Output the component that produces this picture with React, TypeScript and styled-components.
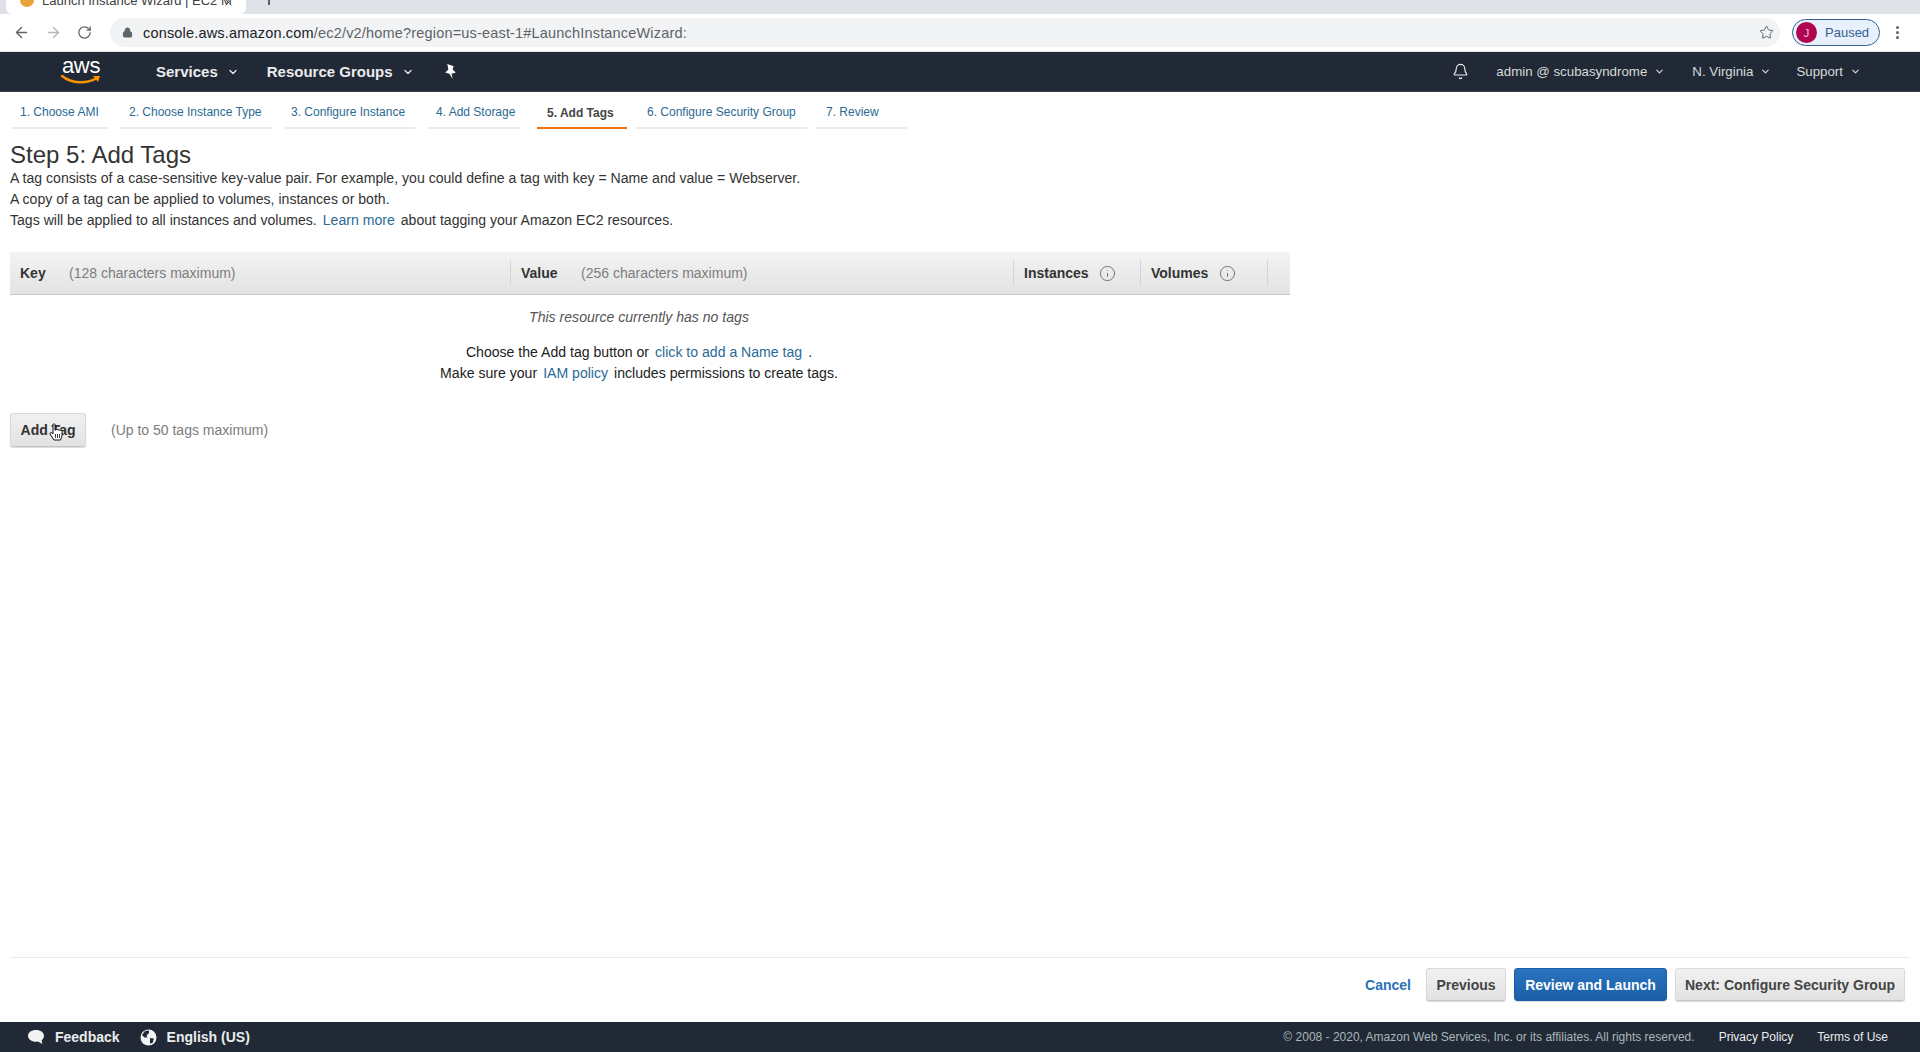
import React from "react";
import styled, { createGlobalStyle } from "styled-components";
import { ArrowLeft, ArrowRight, RotateCw, Lock, Star, Bell, ChevronDown, Info, X } from "lucide-react";

const GlobalStyle = createGlobalStyle`
  html, body { margin: 0; padding: 0; background: #fff; }
  body { font-family: "Liberation Sans", Arial, sans-serif; color: #16191f; overflow: hidden; }
  a { text-decoration: none; color: #2b6a94; }
`;

const Page = styled.div`
  display: flex;
  flex-direction: column;
  height: 1052px;
`;

/* browser chrome */
const TabStrip = styled.div`
  height: 14px;
  background: #dee1e6;
  display: flex;
  align-items: flex-end;
  overflow: hidden;
  flex: none;
`;
const BrowserTab = styled.div`
  width: 240px;
  height: 14px;
  margin-left: 6px;
  background: #fff;
  border-radius: 0 0 6px 6px;
  display: flex;
  align-items: flex-end;
  gap: 8px;
  padding-left: 14px;
  box-sizing: border-box;
  font-size: 13px;
  color: #3c4043;
  position: relative;
`;
const Favicon = styled.span`
  width: 14px;
  height: 14px;
  border-radius: 50%;
  background: #e8a33a;
  margin-bottom: 7px;
  flex: none;
`;
const TabTitle = styled.span`
  line-height: 16px;
  margin-bottom: 5px;
  white-space: nowrap;
`;
const TabClose = styled.span`
  position: absolute;
  right: 12px;
  bottom: 6px;
  display: flex;
  color: #5f6368;
`;
const NewTab = styled.span`
  margin-left: 22px;
  width: 2px;
  height: 8px;
  background: #5f6368;
  margin-bottom: 9px;
`;
const Toolbar = styled.div`
  height: 37px;
  background: #fff;
  display: flex;
  align-items: center;
  padding: 0 12px;
  flex: none;
  border-bottom: 1px solid #e4e5e7;
`;
const NavIcons = styled.div`
  display: flex;
  align-items: center;
  gap: 15px;
  margin: 0 14px 0 1px;
  width: 83px;
  color: #5f6368;
`;
const Omnibox = styled.div`
  flex: none;
  width: 1670px;
  height: 29px;
  border-radius: 15px;
  background: #f1f3f4;
  display: flex;
  align-items: center;
  padding: 0 6px 0 12px;
  box-sizing: border-box;
  font-size: 14.5px;
  letter-spacing: 0.18px;
  color: #5f6368;
`;
const LockWrap = styled.span`
  display: flex;
  color: #5f6368;
  margin-right: 10px;
`;
const Host = styled.span`
  color: #202124;
`;
const StarWrap = styled.span`
  margin-left: auto;
  display: flex;
  color: #5f6368;
`;
const ProfilePill = styled.div`
  margin-left: 12px;
  width: 88px;
  height: 27px;
  flex: none;
  border: 1px solid #34608f;
  border-radius: 14px;
  background: #e8f0fe;
  box-sizing: border-box;
  display: flex;
  align-items: center;
  gap: 8px;
  padding-left: 3px;
  font-size: 13px;
  color: #34608f;
`;
const Avatar = styled.span`
  width: 21px;
  height: 21px;
  border-radius: 50%;
  background: #b0064f;
  color: #f5c6d8;
  font-size: 11px;
  display: flex;
  align-items: center;
  justify-content: center;
`;
const KebabWrap = styled.span`
  margin-left: 16px;
  display: flex;
  flex-direction: column;
  gap: 2px;
`;
const Dot = styled.span`
  width: 3px;
  height: 3px;
  border-radius: 50%;
  background: #5f6368;
`;

/* console header */
const TopNav = styled.header`
  height: 40px;
  box-sizing: border-box;
  background: #212936;
  flex: none;
  display: flex;
  align-items: center;
  color: #fff;
  border-bottom: 1px solid #3c424c;
`;
const Logo = styled.div`
  width: 44px;
  margin-left: 59px;
  position: relative;
  height: 34px;
  display: flex;
  flex-direction: column;
  align-items: center;
`;
const LogoText = styled.span`
  font-size: 22px;
  line-height: 22px;
  color: #fff;
  letter-spacing: -0.3px;
`;
const LogoSmile = styled.svg`
  position: absolute;
  left: 0;
  top: 18px;
`;
const NavMenu = styled.div<{ $gap: number }>`
  display: flex;
  align-items: center;
  margin-left: ${(p) => p.$gap}px;
  gap: 9px;
  font-size: 15px;
  font-weight: 700;
  color: #eaeded;
`;
const NavRight = styled.div`
  margin-left: auto;
  display: flex;
  align-items: center;
  margin-right: 59px;
  font-size: 13.3px;
  color: #d5dbdb;
`;
const NavRightItem = styled.span<{ $ml: number }>`
  display: flex;
  align-items: center;
  gap: 7px;
  margin-left: ${(p) => p.$ml}px;
`;
const PinWrap = styled.span`
  margin-left: 29px;
  display: flex;
`;

/* wizard tabs */
const Wizard = styled.nav`
  height: 37px;
  display: flex;
  padding-left: 11px;
  flex: none;
`;
const Step = styled.a<{ $w: number; $pad: number; $active?: boolean }>`
  width: ${(p) => p.$w}px;
  box-sizing: border-box;
  padding-left: ${(p) => p.$pad}px;
  height: 37px;
  line-height: ${(p) => (p.$active ? 42 : 40)}px;
  font-size: 12px;
  white-space: nowrap;
  font-weight: ${(p) => (p.$active ? 700 : 400)};
  color: ${(p) => (p.$active ? "#444" : "#2b6a94")};
  border-bottom: ${(p) => (p.$active ? "2px solid #ec7211" : "2px solid #eaeded")};
`;
const StepGap = styled.span<{ $w: number }>`
  width: ${(p) => p.$w}px;
  flex: none;
`;

/* content */
const Main = styled.main`
  flex: 1;
  padding: 0 10px;
  min-height: 0;
`;
const Title = styled.h1`
  margin: 12px 0 0;
  font-size: 24px;
  line-height: 27px;
  font-weight: 400;
  color: #333;
`;
const Para = styled.p`
  margin: 0;
  font-size: 14.08px;
  line-height: 21px;
  color: #333;
`;
const LearnLink = styled.a`
  margin: 0 6px;
`;
const TagTable = styled.div`
  margin-top: 21px;
  width: 1280px;
  height: 43px;
  box-sizing: border-box;
  background: linear-gradient(#f3f3f3, #e2e3e3);
  border-bottom: 1px solid #c8c8c8;
  display: grid;
  grid-template-columns: 501px 503px 127px 127px 22px;
  align-items: center;
`;
const HeadCell = styled.div<{ $divider?: boolean }>`
  height: 26px;
  display: flex;
  align-items: center;
  padding-left: 10px;
  font-size: 14px;
  color: #333;
  border-right: ${(p) => (p.$divider ? "1px solid #d5d5d5" : "none")};
`;
const HeadLabel = styled.b<{ $w: number }>`
  width: ${(p) => p.$w}px;
  flex: none;
`;
const Hint = styled.span`
  color: #7d7d7d;
  font-size: 14px;
`;
const InfoWrap = styled.span`
  display: flex;
  color: #666;
`;
const EmptyBox = styled.div`
  width: 1258px;
  text-align: center;
  font-size: 14.08px;
  color: #222;
`;
const EmptyTitle = styled.div`
  margin-top: 12px;
  line-height: 20px;
  font-style: italic;
  color: #555;
`;
const EmptyLine = styled.div<{ $mt: number }>`
  margin-top: ${(p) => p.$mt}px;
  line-height: 20px;
`;
const AddRow = styled.div`
  margin-top: 30px;
  display: flex;
  align-items: center;
`;
const GreyButton = styled.button<{ $w: number }>`
  width: ${(p) => p.$w}px;
  padding: 0;
  font-family: inherit;
  font-size: 14px;
  font-weight: 700;
  color: #444;
  border: 1px solid #d9d9d9;
  border-bottom-color: #c4c4c4;
  border-radius: 3px;
  background: linear-gradient(#f1f1f1, #e2e2e2);
  box-shadow: 0 1px 1px rgba(0, 0, 0, 0.15);
  white-space: nowrap;
`;
const AddButton = styled(GreyButton)`
  height: 34px;
  position: relative;
  color: #333;
`;
const HandCursor = styled.svg`
  position: absolute;
  left: 38px;
  top: 9px;
`;
const AddHint = styled(Hint)`
  margin-left: 25px;
`;

/* action bar */
const ActionBar = styled.div`
  margin: 0 10px;
  height: 65px;
  box-sizing: border-box;
  border-top: 1px solid #eaeded;
  display: flex;
  align-items: flex-start;
  justify-content: flex-end;
  padding: 10px 5px 0 0;
  flex: none;
`;
const CancelLink = styled.a`
  font-size: 14px;
  line-height: 34px;
  font-weight: 700;
  color: #2a72b8;
  margin-right: 15px;
`;
const ActionButton = styled(GreyButton)`
  height: 33px;
  margin-right: 8px;
`;
const PrimaryButton = styled(ActionButton)`
  background: linear-gradient(#2a73bf, #1b5fa8);
  border: 1px solid #1b5fa8;
  color: #fff;
`;
const LastButton = styled(ActionButton)`
  margin-right: 0;
`;

/* footer */
const Footer = styled.footer`
  height: 30px;
  background: #212936;
  flex: none;
  display: flex;
  align-items: center;
  padding: 0 32px 0 27px;
  font-size: 14px;
  color: #eaeded;
`;
const FooterItem = styled.span<{ $ml?: number }>`
  display: flex;
  align-items: center;
  gap: 10px;
  font-weight: 700;
  margin-left: ${(p) => p.$ml ?? 0}px;
`;
const FooterRight = styled.div`
  margin-left: auto;
  display: flex;
  align-items: center;
  font-size: 12px;
`;
const Copy = styled.span`
  color: #aab7b8;
`;
const FooterLink = styled.span`
  color: #eaeded;
  margin-left: 24px;
`;

const steps = [
  { label: "1. Choose AMI", w: 97, pad: 9, gap: 12 },
  { label: "2. Choose Instance Type", w: 152, pad: 9, gap: 13 },
  { label: "3. Configure Instance", w: 130, pad: 6, gap: 13 },
  { label: "4. Add Storage", w: 92, pad: 8, gap: 17 },
  { label: "5. Add Tags", w: 90, pad: 10, active: true, gap: 8 },
  { label: "6. Configure Security Group", w: 172, pad: 12, gap: 9 },
  { label: "7. Review", w: 91, pad: 10, gap: 0 },
];

const InfoIcon = () => (
  <InfoWrap>
    <Info size={17} strokeWidth={1.25} />
  </InfoWrap>
);

export default function App() {
  return (
    <>
      <GlobalStyle />
      <Page>
        <TabStrip>
          <BrowserTab>
            <Favicon />
            <TabTitle>Launch Instance Wizard | EC2 M</TabTitle>
            <TabClose>
              <X size={11} />
            </TabClose>
          </BrowserTab>
          <NewTab />
        </TabStrip>
        <Toolbar>
          <NavIcons>
            <ArrowLeft size={17} />
            <ArrowRight size={17} color="#b5b8bb" />
            <RotateCw size={15} />
          </NavIcons>
          <Omnibox>
            <LockWrap>
              <Lock size={11} fill="#5f6368" />
            </LockWrap>
            <Host>console.aws.amazon.com</Host>/ec2/v2/home?region=us-east-1#LaunchInstanceWizard:
            <StarWrap>
              <Star size={15} strokeWidth={1.6} />
            </StarWrap>
          </Omnibox>
          <ProfilePill>
            <Avatar>J</Avatar>
            Paused
          </ProfilePill>
          <KebabWrap>
            <Dot />
            <Dot />
            <Dot />
          </KebabWrap>
        </Toolbar>
        <TopNav>
          <Logo>
            <LogoText>aws</LogoText>
            <LogoSmile width="44" height="14" viewBox="0 0 44 14">
              <path d="M3 3 C13 11 28 11 38 5" fill="none" stroke="#f79400" strokeWidth="2.4" strokeLinecap="round" />
              <path d="M34 3 L41 3 L39 9 Z" fill="#f79400" />
            </LogoSmile>
          </Logo>
          <NavMenu $gap={53}>
            Services
            <ChevronDown size={12} strokeWidth={2.5} />
          </NavMenu>
          <NavMenu $gap={28}>
            Resource Groups
            <ChevronDown size={12} strokeWidth={2.5} />
          </NavMenu>
          <PinWrap>
            <svg width="15" height="17" viewBox="0 0 14 16">
              <path d="M4 1 L10 3 L9 6 L12 9 L8 10 L9 15 L6 10 L2 9 L5 6 Z" fill="#fff" />
            </svg>
          </PinWrap>
          <NavRight>
            <Bell size={17} strokeWidth={1.6} color="#eaeded" />
            <NavRightItem $ml={27}>
              admin @ scubasyndrome
              <ChevronDown size={11} strokeWidth={2.5} />
            </NavRightItem>
            <NavRightItem $ml={27}>
              N. Virginia
              <ChevronDown size={11} strokeWidth={2.5} />
            </NavRightItem>
            <NavRightItem $ml={25}>
              Support
              <ChevronDown size={11} strokeWidth={2.5} />
            </NavRightItem>
          </NavRight>
        </TopNav>
        <Wizard>
          {steps.map((s) => (
            <React.Fragment key={s.label}>
              <Step href="#" $w={s.w} $pad={s.pad} $active={s.active}>
                {s.label}
              </Step>
              <StepGap $w={s.gap} />
            </React.Fragment>
          ))}
        </Wizard>
        <Main>
          <Title>Step 5: Add Tags</Title>
          <Para>A tag consists of a case-sensitive key-value pair. For example, you could define a tag with key = Name and value = Webserver.</Para>
          <Para>A copy of a tag can be applied to volumes, instances or both.</Para>
          <Para>
            Tags will be applied to all instances and volumes.
            <LearnLink href="#">Learn more</LearnLink>
            about tagging your Amazon EC2 resources.
          </Para>
          <TagTable>
            <HeadCell $divider>
              <HeadLabel $w={49}>Key</HeadLabel>
              <Hint>(128 characters maximum)</Hint>
            </HeadCell>
            <HeadCell $divider>
              <HeadLabel $w={60}>Value</HeadLabel>
              <Hint>(256 characters maximum)</Hint>
            </HeadCell>
            <HeadCell $divider>
              <HeadLabel $w={75}>Instances</HeadLabel>
              <InfoIcon />
            </HeadCell>
            <HeadCell $divider>
              <HeadLabel $w={68}>Volumes</HeadLabel>
              <InfoIcon />
            </HeadCell>
            <HeadCell />
          </TagTable>
          <EmptyBox>
            <EmptyTitle>This resource currently has no tags</EmptyTitle>
            <EmptyLine $mt={15}>
              Choose the Add tag button or<LearnLink href="#">click to add a Name tag</LearnLink>.
            </EmptyLine>
            <EmptyLine $mt={1}>
              Make sure your<LearnLink href="#">IAM policy</LearnLink>includes permissions to create tags.
            </EmptyLine>
          </EmptyBox>
          <AddRow>
            <AddButton $w={76}>
              Add Tag
              <HandCursor width="14" height="18" viewBox="0 0 14 18">
                <path
                  d="M4 1.5 C4 .6 6 .6 6 1.5 L6 7 L7 7 C7 6 9 6 9 7.2 C9 6.4 11 6.4 11 7.6 C11 7 13 7 13 8.4 L13 13 L11.5 17 L5 17 L1 11 C.4 9.8 2 9 3 10 L4 11 Z"
                  fill="#fff"
                  stroke="#111"
                  strokeWidth="1"
                  strokeLinejoin="round"
                />
                <path d="M6.5 11 V15 M8.5 11 V15 M10.5 11 V15" stroke="#111" strokeWidth=".8" />
              </HandCursor>
            </AddButton>
            <AddHint>(Up to 50 tags maximum)</AddHint>
          </AddRow>
        </Main>
        <ActionBar>
          <CancelLink href="#">Cancel</CancelLink>
          <ActionButton $w={80}>Previous</ActionButton>
          <PrimaryButton $w={153}>Review and Launch</PrimaryButton>
          <LastButton $w={230}>Next: Configure Security Group</LastButton>
        </ActionBar>
        <Footer>
          <FooterItem>
            <svg width="18" height="16" viewBox="0 0 18 16">
              <path d="M9 1 C13.5 1 17 3.4 17 6.8 C17 9 15.8 10.6 14.6 11.4 L15.4 15 L11 12.6 C10.4 12.7 9.7 12.8 9 12.8 C4.5 12.8 1 10.2 1 6.8 C1 3.4 4.5 1 9 1 Z" fill="#f2f3f3" />
            </svg>
            Feedback
          </FooterItem>
          <FooterItem $ml={20}>
            <svg width="17" height="17" viewBox="0 0 17 17">
              <circle cx="8.5" cy="8.5" r="8" fill="#f2f3f3" />
              <path d="M5 2 L9 1.5 L9 4 L6.5 6.5 L7.5 8.5 L4.5 8.5 L2 6 Z M10 9 L14 9.5 L12.5 14 L10 14.5 Z" fill="#212936" />
            </svg>
            English (US)
          </FooterItem>
          <FooterRight>
            <Copy>© 2008 - 2020, Amazon Web Services, Inc. or its affiliates. All rights reserved.</Copy>
            <FooterLink>Privacy Policy</FooterLink>
            <FooterLink>Terms of Use</FooterLink>
          </FooterRight>
        </Footer>
      </Page>
    </>
  );
}
